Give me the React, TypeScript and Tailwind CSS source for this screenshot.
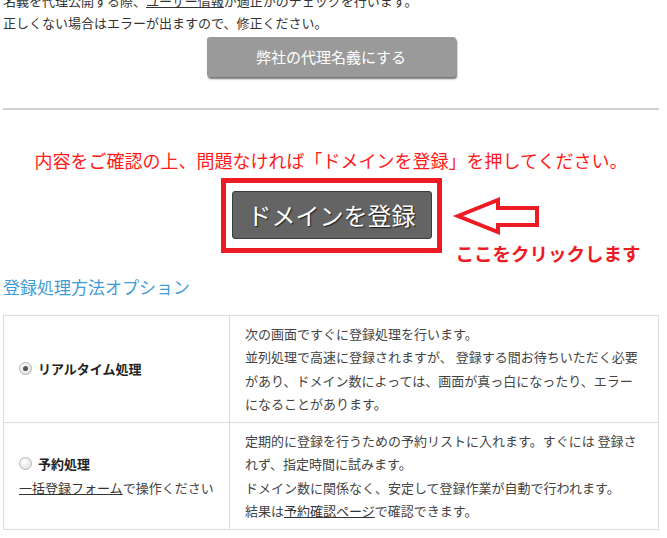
import React from 'react';

const Radio = ({ checked }: { checked?: boolean }) => (
  <span className="relative inline-block w-[13px] h-[13px] rounded-full border border-[#b5b5b5] bg-[radial-gradient(circle_at_40%_35%,#ffffff,#d9d9d9)] align-middle mr-[6px] -mt-[3px]">
    {checked && (
      <span className="absolute left-[3px] top-[3px] w-[5px] h-[5px] rounded-full bg-[#555]" />
    )}
  </span>
);

const App = () => {
  return (
    <div className="w-[667px] h-[538px] overflow-hidden bg-white font-['Noto_Sans_CJK_JP','Noto_Sans',sans-serif] text-[13px] text-[#333]">
      <div className="mx-[3px] w-[656px] -mt-[10px]">
        <p className="leading-[22px]">
          名義を代理公開する際、<span className="underline">ユーザー情報</span>が適正かのチェックを行います。
          <br />
          正しくない場合はエラーが出ますので、修正ください。
        </p>

        <div className="flex justify-center mt-[3px]">
          <button className="w-[249px] h-[40px] rounded-[3px] bg-[#9a9a9a] text-white text-[15px] shadow-[1px_2px_2px_rgba(0,0,0,0.55)]">
            弊社の代理名義にする
          </button>
        </div>

        <div className="mt-[31px] h-[2px] bg-[#cfcfcf]" />

        <p className="mt-[37px] text-center text-[18px] leading-[26px] text-[#ff1a1a]">
          内容をご確認の上、問題なければ「ドメインを登録」を押してください。
        </p>

        {/* annotated button */}
        <div className="flex justify-center mt-[5px]">
          <div className="relative border-[5px] border-[#ed1c24] pt-[8px] pb-[9px] pl-[6px] pr-[5px]">
            <button className="w-[200px] h-[48px] rounded-[3px] bg-[#646464] border border-[#3c3c3c] text-white text-[24px] leading-[46px] [text-shadow:1px_1px_1px_rgba(0,0,0,0.7)]">
              ドメインを登録
            </button>
            <svg
              className="absolute left-[226px] top-[12px]"
              width="90"
              height="42"
              viewBox="0 0 90 42"
            >
              <polygon
                points="6,21 46,5 46,13 85,13 85,30 46,30 46,37"
                fill="white"
                stroke="#ed1c24"
                strokeWidth="4"
                strokeLinejoin="miter"
              />
            </svg>
            <span className="absolute left-[230px] top-[58px] whitespace-nowrap text-[18.5px] leading-[24px] font-bold text-[#ed1c24]">
              ここをクリックします
            </span>
          </div>
        </div>

        <h3 className="mt-[21px] text-[17px] leading-[26px] text-[#3f9bd5]">登録処理方法オプション</h3>

        <table className="mt-[15px] w-[656px] border-collapse border border-[#dcdcdc] text-[13px]">
          <tbody>
            <tr className="h-[106px]">
              <td className="w-[226px] border border-[#dcdcdc] pl-[15px] align-middle">
                <span className="font-bold text-[#222] leading-[24px]">
                  <Radio checked />
                  リアルタイム処理
                </span>
              </td>
              <td className="border border-[#dcdcdc] pl-[15px] pr-[8px] py-[6px] leading-[23.4px] text-[#444] whitespace-nowrap">
                次の画面ですぐに登録処理を行います。
                <br />
                並列処理で高速に登録されますが、 登録する間お待ちいただく必要
                <br />
                があり、ドメイン数によっては、画面が真っ白になったり、エラー
                <br />
                になることがあります。
              </td>
            </tr>
            <tr className="h-[107px]">
              <td className="border border-[#dcdcdc] pl-[15px] align-middle leading-[24px] text-[#444]">
                <span className="font-bold text-[#222]">
                  <Radio />
                  予約処理
                </span>
                <br />
                <span className="underline text-[#333]">一括登録フォーム</span>で操作ください
              </td>
              <td className="border border-[#dcdcdc] pl-[15px] pr-[8px] py-[6px] leading-[23.4px] text-[#444] whitespace-nowrap">
                定期的に登録を行うための予約リストに入れます。すぐには 登録さ
                <br />
                れず、指定時間に試みます。
                <br />
                ドメイン数に関係なく、安定して登録作業が自動で行われます。
                <br />
                結果は<span className="underline text-[#333]">予約確認ページ</span>で確認できます。
              </td>
            </tr>
          </tbody>
        </table>
      </div>
    </div>
  );
};

export default App;
